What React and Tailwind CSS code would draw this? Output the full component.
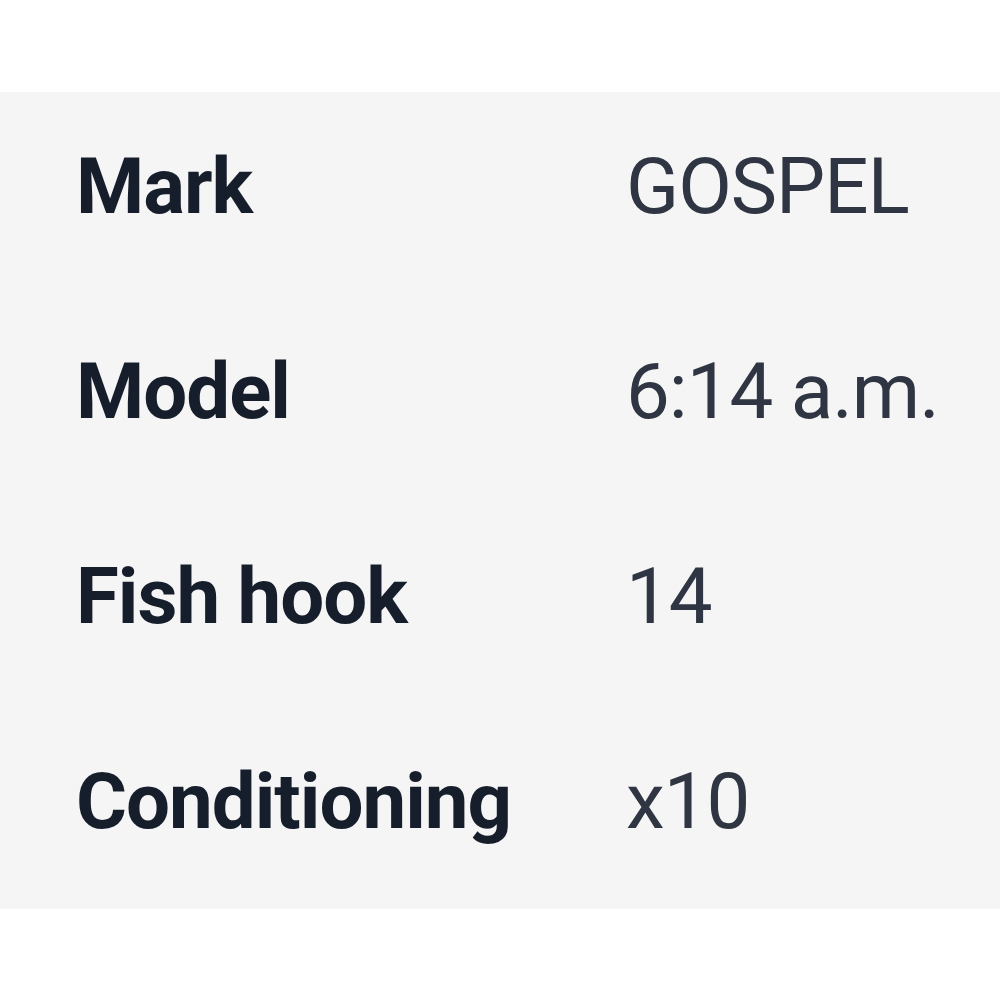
const specs = [
  { label: "Mark", value: "GOSPEL" },
  { label: "Model", value: "6:14 a.m." },
  { label: "Fish hook", value: "14" },
  { label: "Conditioning", value: "x10" },
];

export default function App() {
  return (
    <div className="min-h-screen bg-white pt-[92px]" style={{ fontFamily: "Roboto, 'Noto Sans', sans-serif" }}>
      <div className="flex flex-col gap-[127px] bg-[#f5f5f5] pt-[56px] pb-[68px] pl-[76px]">
        {specs.map((row) => (
          <div key={row.label} className="flex items-start text-[78px] leading-none tracking-[-1px]">
            <span className="w-[550px] font-bold text-[#161d2b]">{row.label}</span>
            <span className="font-normal text-[#2f3542]">{row.value}</span>
          </div>
        ))}
      </div>
    </div>
  );
}
